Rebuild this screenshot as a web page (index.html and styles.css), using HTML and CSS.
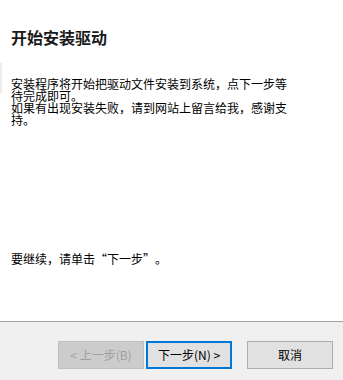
FILE: index.html
```html
<!DOCTYPE html>
<html lang="zh-CN">
<head>
<meta charset="utf-8">
<title>开始安装驱动</title>
<link rel="stylesheet" href="styles.css">
</head>
<body>
<div class="wizard">
  <div class="main">
    <h1 class="title">开始安装驱动</h1>
    <div class="intro-row">
      <div class="edge"></div>
      <div class="intro">
        <p class="para">安装程序将开始把驱动文件安装到系统，点下一步等待完成即可。</p>
        <p class="para">如果有出现安装失败，请到网站上留言给我，感谢支持。</p>
      </div>
    </div>
    <p class="continue">要继续，请单击<span class="q q-open">“</span>下一步<span class="q q-close">”</span>。</p>
  </div>
  <div class="footer">
    <button class="btn btn-disabled" disabled>&lt; 上一步(B)</button>
    <button class="btn btn-default">下一步(N) &gt;</button>
    <button class="btn btn-cancel">取消</button>
  </div>
</div>
</body>
</html>
```
FILE: styles.css
```css
html, body {
  margin: 0;
  padding: 0;
  background: #ffffff;
}
body {
  font-family: "Noto Sans CJK SC", "Noto Sans", sans-serif;
  color: #000000;
}
.wizard {
  width: 343px;
  height: 380px;
  display: flex;
  flex-direction: column;
}
.main {
  flex: 1;
  display: flex;
  flex-direction: column;
}
.title {
  margin: 28px 0 0 11px;
  font-size: 16px;
  line-height: 18px;
  font-weight: bold;
  color: #1a1a1a;
}
.intro-row {
  display: flex;
  margin-top: 32px;
}
.edge {
  width: 2px;
  height: 30px;
  margin-top: -15px;
  background: #ececec;
}
.intro {
  margin: 0 0 0 9px;
  width: 282px;
  font-size: 12px;
  line-height: 12px;
}
.para {
  margin: 0;
}
.continue {
  margin: auto 0 0 11px;
  padding-bottom: 55px;
  font-size: 12px;
  line-height: 14px;
}
.q {
  display: inline-block;
  width: 12px;
}
.q-open {
  text-align: right;
}
.q-close {
  text-align: left;
}
.footer {
  height: 59px;
  box-sizing: border-box;
  border-top: 1px solid #a0a0a0;
  background: #f0f0f0;
  display: flex;
  justify-content: flex-end;
  align-items: flex-start;
  padding: 19px 10px 0 0;
}
.btn {
  width: 86px;
  height: 28px;
  box-sizing: border-box;
  font-family: "Noto Sans CJK SC", "Noto Sans", sans-serif;
  font-size: 12px;
  line-height: 14px;
  padding: 0;
  background: #e1e1e1;
  border: 1px solid #adadad;
  color: #000000;
}
.btn-disabled {
  background: #cccccc;
  border-color: #bfbfbf;
  color: #a0a0a0;
}
.btn-default {
  margin-left: 2px;
  border: 2px solid #0078d7;
}
.btn-cancel {
  margin-left: 15px;
}
```
